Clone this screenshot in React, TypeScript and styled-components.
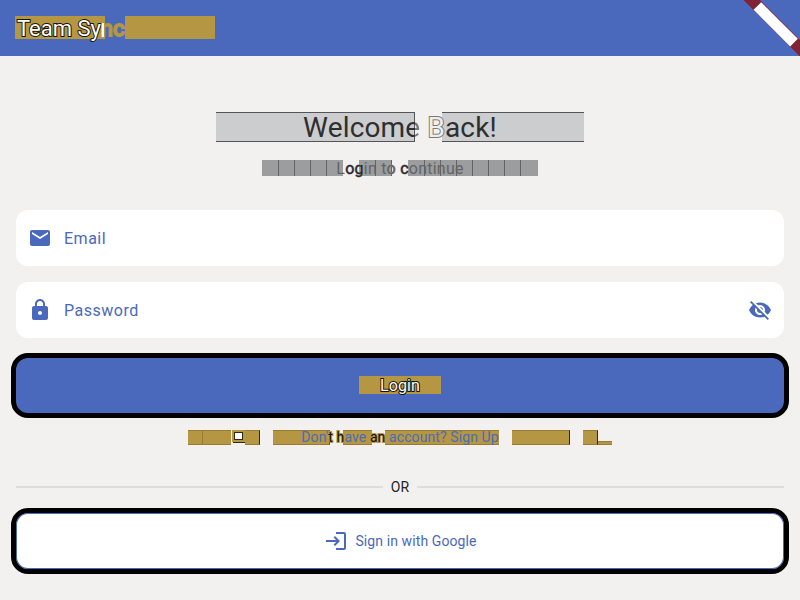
import React from 'react';
import styled, { createGlobalStyle, css } from 'styled-components';
import { MdEmail, MdLock, MdLogin, MdVisibilityOff } from 'react-icons/md';

const blue = '#4a69bd';
const gold = '#b59642';

const GlobalStyle = createGlobalStyle`
  * { box-sizing: border-box; }
  body { margin: 0; background: #f3f2f1; font-family: Roboto, sans-serif; overflow: hidden; }
`;

const Page = styled.div`
  width: 800px;
  height: 600px;
  overflow: hidden;
  background: #f3f1f0;
`;

const AppBar = styled.header`
  position: relative;
  height: 56px;
  padding: 16px 15px;
  background: ${blue};
`;

const Ribbon = styled.svg`
  position: absolute;
  top: 0;
  right: 0;
`;

const Content = styled.main`
  display: flex;
  flex-direction: column;
  padding: 56px 16px 0;
`;

const Layered = styled.div<{ $width: number; $height: number }>`
  display: grid;
  grid-template: 100% / 100%;
  align-self: center;
  width: ${p => p.$width}px;
  height: ${p => p.$height}px;
  > * { grid-area: 1 / 1; }
`;

const Strip = styled.div`
  display: flex;
  height: 100%;
`;

const Block = styled.span<{ $w: number; $gap?: number; $kind?: 'gray' | 'light' | 'link'; $edge?: string; $h?: number }>`
  flex: none;
  width: ${p => p.$w}px;
  height: ${p => (p.$h ? `${p.$h}px` : '100%')};
  align-self: ${p => (p.$h === 4 ? 'flex-end' : 'flex-start')};
  margin-left: ${p => p.$gap ?? 0}px;
  background: ${gold};
  ${p => p.$kind === 'light' && css`
    background: #cccdcf;
    border-top: 1px solid #555557;
    border-bottom: 1px solid #555557;
  `}
  ${p => p.$kind === 'gray' && css`background: #9c9d9f;`}
  ${p => p.$kind === 'link' && css`
    border-top: 1px solid #997b32;
    border-bottom: 1px solid #997b32;
  `}
  ${p => p.$edge && css`border-right: 1px solid ${p.$edge};`}
`;

const Corner = styled(Block)`
  border: 3px solid ${gold};
  outline: 1px solid #33290e;
  outline-offset: -3px;
  background: #fff;
  box-shadow: 1px 1px #33290e;
`;

const Title = styled.h1`
  margin: 0;
  padding-left: 2px;
  font-size: 22px;
  line-height: 25px;
  font-weight: 400;
  white-space: nowrap;
  color: #fff;
`;

const Heading = styled.h2`
  margin: 0;
  font-size: 28px;
  line-height: 32px;
  letter-spacing: 0.15px;
  font-weight: 400;
  text-align: center;
  white-space: nowrap;
  color: #302f2f;
`;

const Caption = styled.p<{ $size: number; $spacing: number; $color: string; $line?: number }>`
  margin: 0;
  font-size: ${p => p.$size}px;
  line-height: ${p => p.$line ?? 17}px;
  letter-spacing: ${p => p.$spacing}px;
  text-align: center;
  white-space: nowrap;
  color: ${p => p.$color};
`;

const Outline = styled.span<{ $stroke: string; $fill?: string; $size?: number }>`
  -webkit-text-stroke: ${p => p.$size ?? 2}px ${p => p.$stroke};
  paint-order: stroke fill;
  ${p => p.$fill && css`color: ${p.$fill};`}
`;

const SplitLetter = styled.span<{ $left: string; $right: string; $at: number; $stroke: number }>`
  color: transparent;
  -webkit-text-stroke: ${p => p.$stroke}px transparent;
  background: linear-gradient(90deg, ${p => p.$left} ${p => p.$at}px, ${p => p.$right} ${p => p.$at}px);
  -webkit-background-clip: text;
  background-clip: text;
`;

const Field = styled.label`
  display: flex;
  align-items: center;
  height: 56px;
  margin-bottom: 16px;
  padding: 0 12px;
  border-radius: 12px;
  background: #fff;
  color: ${blue};
  font-size: 16px;
  letter-spacing: 0.5px;
  svg { flex: none; }
`;

const FieldText = styled.span`
  flex: 1;
  padding: 1px 0 0 12px;
`;

const Button = styled.button<{ $secondary?: boolean }>`
  display: flex;
  align-items: center;
  justify-content: center;
  gap: 8px;
  width: 778px;
  height: ${p => (p.$secondary ? 66 : 65)}px;
  margin: ${p => (p.$secondary ? '11px -5px 0' : '-1px -5px 0')};
  padding: ${p => (p.$secondary ? '0' : '0 0 1px')};
  border: 5px solid #000;
  border-radius: 17px;
  background: ${p => (p.$secondary ? '#fff' : blue)};
  color: ${p => (p.$secondary ? blue : '#fff')};
  box-shadow: ${p => (p.$secondary ? `inset 0 0 0 1px ${blue}` : 'none')};
  font: 400 14px Roboto, sans-serif;
  letter-spacing: 0.1px;
  > svg { margin: 0 -1px 0 1px; }
`;

const LinkRow = styled.div`
  display: flex;
  justify-content: center;
  height: 17px;
  margin-top: 12px;
`;

const LinkLayer = styled(Layered)`
  align-self: flex-start;
`;

const Divider = styled.div`
  display: flex;
  align-items: center;
  gap: 8px;
  height: 20px;
  margin-top: 30px;
  color: #242428;
  font-size: 14px;
  letter-spacing: 0.25px;
  &::before, &::after { content: ''; flex: 1; height: 2px; background: #dddce0; }
`;

const CaptionLayer = styled(Layered)`
  margin-top: 18px;
  margin-bottom: 34px;
`;

export default function App() {
  return (
    <Page>
      <GlobalStyle />
      <AppBar>
        <Layered $width={200} $height={23}>
          <Strip><Block $w={90} /><Block $w={90} $gap={20} /></Strip>
          <Title>
            <Outline $stroke="#161207">Team Sy</Outline>
            <SplitLetter $left="#fff" $right={gold} $at={3} $stroke={2}>n</SplitLetter>
            <Outline $stroke={gold} $fill={gold}>c</Outline>
          </Title>
        </Layered>
        <Ribbon width="60" height="56" viewBox="740 0 60 56">
          <path d="M743.5 0H760L800 40V56.5Z" fill="#812334" />
          <path d="M761.2 2.2L797.8 38.8L790.2 46.4L753.6 9.8Z" fill="#fff" />
        </Ribbon>
      </AppBar>
      <Content>
        <Layered $width={368} $height={30}>
          <Strip><Block $w={199} $kind="light" $edge="#555557" /><Block $w={142} $gap={27} $kind="light" /></Strip>
          <Heading>Welcom<SplitLetter $left="#302f2f" $right="#77797b" $at={10} $stroke={0}>e</SplitLetter> <Outline $stroke="#77797b" $fill="#eeeeef">B</Outline>ack!</Heading>
        </Layered>
        <CaptionLayer $width={276} $height={16}>
          <Strip>
            {[17, 16, 16, 16, 16].map((w, i) => <Block key={i} $w={w} $kind="gray" $edge={i < 4 ? '#626365' : undefined} />)}
            <Block $w={17} $gap={16} $kind="gray" $edge="#626365" /><Block $w={16} $kind="gray" $edge="#626365" />
            <Block $w={17} $gap={16} $kind="gray" $edge="#626365" />
            {[16, 16, 16, 16, 16, 16, 17].map((w, i) => <Block key={i} $w={w} $kind="gray" $edge={i < 6 ? '#626365' : undefined} />)}
          </Strip>
          <Caption $size={16} $spacing={0.25} $color="#646464" $line={18}>
            L<Outline $stroke="#8d8f91" $fill="#252525" $size={1}>og</Outline>in t<Outline $stroke="#8d8f91" $size={1}>o</Outline> <Outline $stroke="#8d8f91" $fill="#252525" $size={1}>c</Outline>ontinue
          </Caption>
        </CaptionLayer>
        <Field><MdEmail size={24} /><FieldText>Email</FieldText></Field>
        <Field><MdLock size={24} /><FieldText>Password</FieldText><MdVisibilityOff size={24} /></Field>
        <Button>
          <Layered $width={82} $height={18}>
            <Strip><Block $w={82} /></Strip>
            <Caption $size={16} $spacing={0.1} $color="#fff" $line={19}><Outline $stroke="#161207">Login</Outline></Caption>
          </Layered>
        </Button>
        <LinkRow>
          <LinkLayer $width={424} $height={15}>
            <Strip>
              <Block $w={15} $kind="link" $edge="#997b32" /><Block $w={28} $kind="link" />
              <Corner $w={13} $gap={1} $h={12} />
              <Block $w={15} $kind="link" $edge="#33290e" />
              <Block $w={57} $gap={13} $kind="link" $edge="#665420" />
              <Block $w={29} $gap={13} $kind="link" />
              <Block $w={114} $gap={13} $kind="link" />
              <Block $w={58} $gap={13} $kind="link" $edge="#33290e" />
              <Block $w={15} $gap={13} $kind="link" $edge="#33290e" />
              <Block $w={14} $h={4} $kind="link" />
            </Strip>
            <Caption $size={14} $spacing={0.1} $color="#4d6cb8" $line={15}>
              Don'<Outline $stroke={gold} $fill="#171207">t h</Outline>ave <Outline $stroke={gold} $fill="#171207">an</Outline> account? Sign Up
            </Caption>
          </LinkLayer>
        </LinkRow>
        <Divider>OR</Divider>
        <Button $secondary><MdLogin size={24} />Sign in with Google</Button>
      </Content>
    </Page>
  );
}
